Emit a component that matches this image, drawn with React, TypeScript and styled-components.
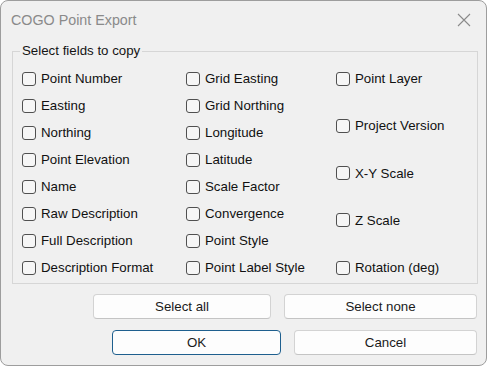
import React from "react";
import styled, { createGlobalStyle } from "styled-components";

const Global = createGlobalStyle`
  html, body { margin: 0; padding: 0; background: #ffffff; }
  body { font-family: "Liberation Sans", Arial, sans-serif; }
  * { box-sizing: border-box; }
`;

const Window = styled.div`
  width: 487px;
  height: 366px;
  border: 1px solid #9d9d9d;
  border-radius: 8px;
  background: #f0f0f0;
  display: flex;
  flex-direction: column;
  overflow: hidden;
`;

const TitleBar = styled.div`
  height: 36px;
  display: flex;
  align-items: center;
  justify-content: space-between;
  padding: 0 15px 0 10px;
`;

const Title = styled.div`
  font-size: 14.3px;
  color: #8a8a8a;
  padding-top: 2px;
`;

const CloseIcon = styled.svg`
  width: 14px;
  height: 14px;
  display: block;
  margin-top: 2px;
`;

const Group = styled.fieldset`
  margin: 6px 8px 0 11px;
  padding: 6px 0 2px 9px;
  border: 1px solid #d6d6d6;
  border-radius: 0;
  min-width: 0;
`;

const Legend = styled.legend`
  font-size: 13.3px;
  line-height: 16px;
  color: #141414;
  padding: 0 2px;
  margin-left: -2px;
`;

const Columns = styled.div`
  display: grid;
  grid-template-columns: 164px 150px 1fr;
`;

const Column = styled.div<{ $spread?: boolean }>`
  display: flex;
  flex-direction: column;
  justify-content: ${(p) => (p.$spread ? "space-between" : "flex-start")};
`;

const CheckRow = styled.label`
  height: 27px;
  display: flex;
  align-items: center;
  gap: 5px;
  font-size: 13.3px;
  color: #111;
  white-space: nowrap;
`;

const Box = styled.span`
  width: 14px;
  height: 14px;
  border: 1px solid #505050;
  border-radius: 3px;
  background: #f6f6f6;
  flex: none;
`;

const ButtonRow = styled.div<{ $top: number }>`
  display: flex;
  justify-content: flex-end;
  gap: 13px;
  padding-right: 9px;
  margin-top: ${(p) => p.$top}px;
`;

const Button = styled.button<{ $w: number; $primary?: boolean }>`
  width: ${(p) => p.$w}px;
  height: 25px;
  font-family: "Liberation Sans", Arial, sans-serif;
  font-size: 13.3px;
  color: #1a1a1a;
  background: #fdfdfd;
  border: 1px solid ${(p) => (p.$primary ? "#1e5f8e" : "#d3d3d3")};
  border-bottom-color: ${(p) => (p.$primary ? "#1e5f8e" : "#c4c4c4")};
  border-radius: 4px;
  padding: 0;
`;

const col1 = [
  "Point Number",
  "Easting",
  "Northing",
  "Point Elevation",
  "Name",
  "Raw Description",
  "Full Description",
  "Description Format",
];
const col2 = [
  "Grid Easting",
  "Grid Northing",
  "Longitude",
  "Latitude",
  "Scale Factor",
  "Convergence",
  "Point Style",
  "Point Label Style",
];
const col3 = ["Point Layer", "Project Version", "X-Y Scale", "Z Scale", "Rotation (deg)"];

const Check = ({ label }: { label: string }) => (
  <CheckRow>
    <Box />
    {label}
  </CheckRow>
);

export default function App() {
  return (
    <>
      <Global />
      <Window>
        <TitleBar>
          <Title>COGO Point Export</Title>
          <CloseIcon viewBox="0 0 14 14">
            <path d="M1 1 L13 13 M13 1 L1 13" stroke="#8a8a8a" strokeWidth="1.1" fill="none" />
          </CloseIcon>
        </TitleBar>
        <Group>
          <Legend>Select fields to copy</Legend>
          <Columns>
            <Column>
              {col1.map((l) => (
                <Check key={l} label={l} />
              ))}
            </Column>
            <Column>
              {col2.map((l) => (
                <Check key={l} label={l} />
              ))}
            </Column>
            <Column $spread>
              {col3.map((l) => (
                <Check key={l} label={l} />
              ))}
            </Column>
          </Columns>
        </Group>
        <ButtonRow $top={10}>
          <Button $w={178}>Select all</Button>
          <Button $w={193}>Select none</Button>
        </ButtonRow>
        <ButtonRow $top={11}>
          <Button $w={169} $primary>
            OK
          </Button>
          <Button $w={183}>Cancel</Button>
        </ButtonRow>
      </Window>
    </>
  );
}
